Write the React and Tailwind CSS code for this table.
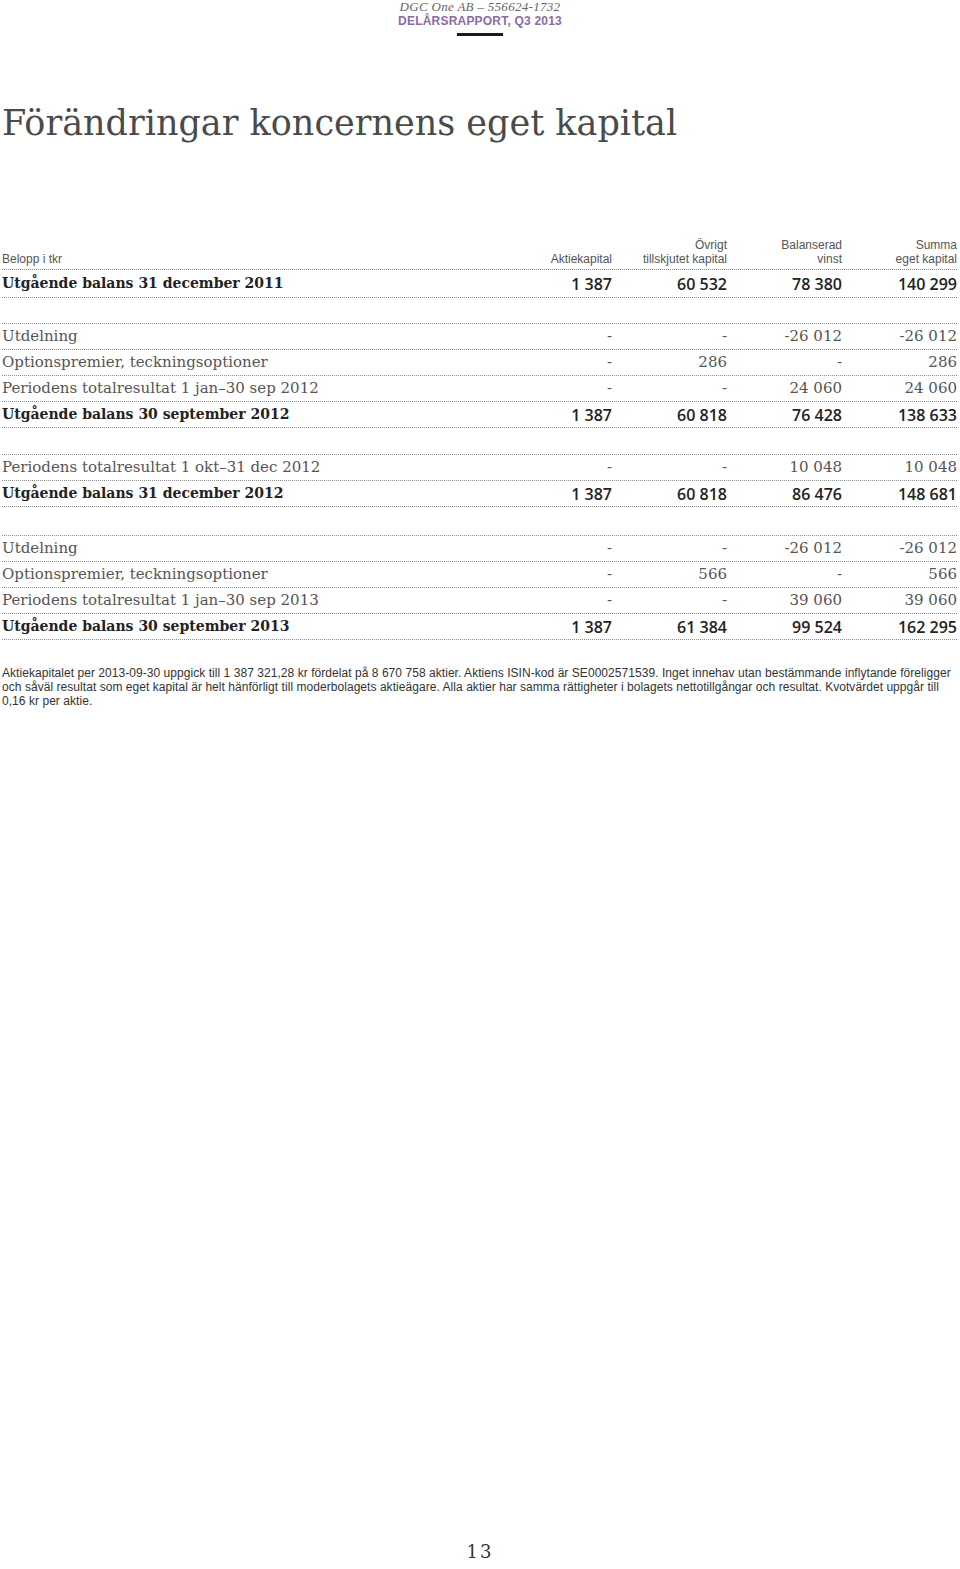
import React from "react";

const groups = [
  {
    mt: "mt-0",
    top: false,
    rows: [
      { label: "Utgående balans 31 december 2011", values: ["1 387", "60 532", "78 380", "140 299"], bold: true, tall: true },
    ],
  },
  {
    mt: "mt-[25px]",
    top: true,
    rows: [
      { label: "Utdelning", values: ["-", "-", "-26 012", "-26 012"] },
      { label: "Optionspremier, teckningsoptioner", values: ["-", "286", "-", "286"] },
      { label: "Periodens totalresultat 1 jan–30 sep 2012", values: ["-", "-", "24 060", "24 060"] },
      { label: "Utgående balans 30 september 2012", values: ["1 387", "60 818", "76 428", "138 633"], bold: true },
    ],
  },
  {
    mt: "mt-[26px]",
    top: true,
    rows: [
      { label: "Periodens totalresultat 1 okt–31 dec 2012", values: ["-", "-", "10 048", "10 048"] },
      { label: "Utgående balans 31 december 2012", values: ["1 387", "60 818", "86 476", "148 681"], bold: true },
    ],
  },
  {
    mt: "mt-[28px]",
    top: true,
    rows: [
      { label: "Utdelning", values: ["-", "-", "-26 012", "-26 012"] },
      { label: "Optionspremier, teckningsoptioner", values: ["-", "566", "-", "566"] },
      { label: "Periodens totalresultat 1 jan–30 sep 2013", values: ["-", "-", "39 060", "39 060"] },
      { label: "Utgående balans 30 september 2013", values: ["1 387", "61 384", "99 524", "162 295"], bold: true },
    ],
  },
];

const Row = ({ row }) => (
  <div
    className={`flex items-center border-b border-dotted border-[#8a8a8a] ${
      row.tall ? "h-[28px]" : "h-[26px]"
    }`}
  >
    <div
      className={`flex-1 whitespace-nowrap font-['DejaVu_Serif',serif] ${
        row.bold ? "text-[14px] font-bold text-[#222]" : "text-[15px] text-[#555]"
      }`}
    >
      {row.label}
    </div>
    {row.values.map((v, i) => (
      <div
        key={i}
        className={`w-[115px] text-right whitespace-nowrap ${
          row.bold
            ? "font-['Open_Sans',sans-serif] text-[16px] font-semibold text-[#222]"
            : "font-['DejaVu_Serif',serif] text-[15px] text-[#555]"
        }`}
      >
        {v}
      </div>
    ))}
  </div>
);

export default function App() {
  return (
    <div className="w-[960px] h-[1569px] bg-white flex flex-col">
      {/* Page header */}
      <div className="flex flex-col items-center">
        <div className="h-[13px] leading-[13px] text-[13px] italic tracking-[0.3px] text-[#666] font-['Liberation_Serif',serif]">
          DGC One AB – 556624-1732
        </div>
        <div className="mt-[2px] h-[12px] leading-[12px] text-[12px] font-bold tracking-[0.2px] text-[#8a6d9f] font-['Liberation_Sans',sans-serif]">
          DELÅRSRAPPORT, Q3 2013
        </div>
        <div className="mt-[6px] w-[46px] h-[3px] bg-[#1a1a1a]" />
      </div>

      {/* Title */}
      <h1 className="mt-[67px] pl-[2px] h-[40px] leading-[40px] text-[35px] text-[#4a4a4a] font-['DejaVu_Serif',serif]">
        Förändringar koncernens eget kapital
      </h1>

      {/* Table */}
      <div className="mt-[93px] pl-[2px] pr-[3px]">
        <div className="flex items-end pt-[2px] pb-[3px] border-b border-dotted border-[#8a8a8a] text-[12px] leading-[14px] text-[#555] font-['Liberation_Sans',sans-serif]">
          <div className="flex-1">Belopp i tkr</div>
          <div className="w-[115px] text-right">Aktiekapital</div>
          <div className="w-[115px] text-right">
            Övrigt
            <br />
            tillskjutet kapital
          </div>
          <div className="w-[115px] text-right">
            Balanserad
            <br />
            vinst
          </div>
          <div className="w-[115px] text-right">
            Summa
            <br />
            eget kapital
          </div>
        </div>

        {groups.map((g, gi) => (
          <div
            key={gi}
            className={`${g.mt} ${g.top ? "border-t border-dotted border-[#8a8a8a]" : ""}`}
          >
            {g.rows.map((r, ri) => (
              <Row key={ri} row={r} />
            ))}
          </div>
        ))}

        {/* Footnote */}
        <p className="mt-[26px] text-[12px] leading-[14px] tracking-[0.05px] text-[#333] font-['Liberation_Sans',sans-serif] whitespace-nowrap">
          Aktiekapitalet per 2013-09-30 uppgick till 1 387 321,28 kr fördelat på 8 670 758 aktier. Aktiens ISIN-kod är SE0002571539. Inget innehav utan bestämmande inflytande föreligger
          <br />
          och såväl resultat som eget kapital är helt hänförligt till moderbolagets aktieägare. Alla aktier har samma rättigheter i bolagets nettotillgångar och resultat. Kvotvärdet uppgår till
          <br />
          0,16 kr per aktie.
        </p>
      </div>

      {/* Page number */}
      <div className="mt-auto pb-[8px] flex justify-center">
        <span className="h-[18px] leading-[18px] text-[18px] tracking-[2px] text-[#333] font-['DejaVu_Serif',serif]">
          13
        </span>
      </div>
    </div>
  );
}
